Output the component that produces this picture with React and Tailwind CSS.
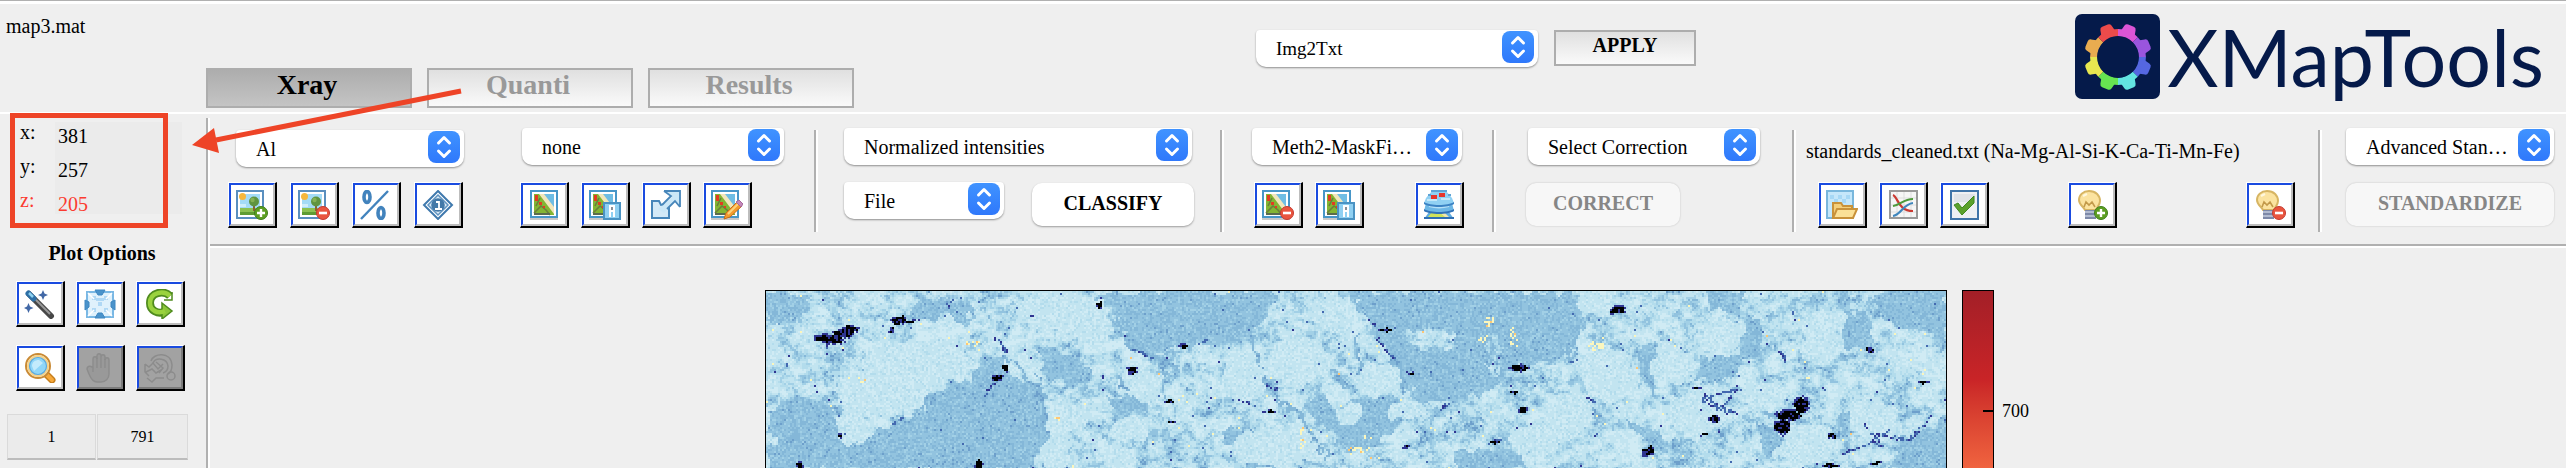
import React, { useMemo } from "react";

/* ---------- toolbar icons, drawn on a 32 x 30 grid ---------- */

function Svg({ children }) {
  return (
    <svg viewBox="0 0 32 30" className="h-[30px] w-8" aria-hidden="true">
      {children}
    </svg>
  );
}

const PlusBadge = () => (
  <g>
    <circle cx="25" cy="23" r="6.5" fill="#5d9e22" stroke="#3f7f1c" />
    <path d="M25 19v8M21 23h8" stroke="#fff" strokeWidth="2.4" />
  </g>
);

const MinusBadge = () => (
  <g>
    <circle cx="25" cy="23" r="6.5" fill="#e9553f" stroke="#c5392f" />
    <path d="M21 23h8" stroke="#fff" strokeWidth="2.6" />
  </g>
);

const PictureBase = () => (
  <g>
    <rect x="1" y="1" width="26" height="27" fill="#fff" stroke="#5a8fbf" strokeWidth="2" />
    <rect x="4" y="4" width="20" height="15" fill="#a3dbf7" />
    <path d="M4 14h6v3H4z" fill="#cfeefb" />
    <circle cx="6.500" cy="6.500" r="3.500" fill="#f6b73c" />
    <rect x="4" y="18" width="20" height="7" fill="#8cc152" />
    <path d="M4 22h20v3H4z" fill="#5f9c33" />
    <rect x="17" y="14" width="2" height="7" fill="#8a6134" />
    <circle cx="18" cy="11.500" r="5" fill="#5f9440" />
    <circle cx="16.500" cy="10" r="2.200" fill="#84b155" />
  </g>
);

const MapBase = () => (
  <g>
    <rect x="1" y="1" width="26" height="26" fill="#fff" stroke="#4796c8" strokeWidth="2" />
    <path d="M0 29h28" stroke="#c9c9c9" strokeWidth="2" />
    <rect x="4" y="4" width="20" height="21" fill="#83b533" />
    <path d="M12 4h12v15z" fill="#6fbde4" />
    <path d="M9 4h5l10 13v7z" fill="#f1e6bb" />
    <path d="M4 23l7-7 5 4 4 5M10 8l-4 8" stroke="#6a7f3a" strokeWidth="1.600" fill="none" />
    <path d="M5 5h3v6H5zM9 12h3v3H9zM13 16h2v2h-2z" fill="#e23b22" />
    <path d="M4 24h16" stroke="#5b6b4c" strokeWidth="2" />
  </g>
);

const WindowBadge = () => (
  <g>
    <rect x="15" y="13" width="16" height="16" fill="#8fd0f2" stroke="#4a93c3" strokeWidth="2" />
    <path d="M20 15h6v12h-2v-5h-2v5h-2z" fill="#fff" />
    <path d="M22 17h2v3h-2z" fill="#8a8f96" />
  </g>
);

const BulbBase = () => (
  <g>
    <path d="M13 1c7 0 11 4.500 11 10 0 4-3 6-4 9H9c-1-3-6-5-6-10C3 5 7 1 13 1z" fill="#fbe3a0" stroke="#d7b563" strokeWidth="2" />
    <path d="M8 17l2-5 3 3 3-3 3 5" fill="none" stroke="#c2994a" strokeWidth="1.600" />
    <path d="M7 6l4-2" stroke="#fff8df" strokeWidth="2" />
    <rect x="9" y="20" width="11" height="9" fill="#7d89a8" />
    <path d="M9 22h11M9 26h11" stroke="#c4cbdd" strokeWidth="1.500" />
  </g>
);

const ICONS = {
  addMap: (<><PictureBase /><PlusBadge /></>),
  removeMap: (<><PictureBase /><MinusBadge /></>),
  percent: (
    <g fill="none" stroke="#4283bd">
      <ellipse cx="7" cy="7" rx="3" ry="5.500" strokeWidth="3.600" />
      <ellipse cx="21" cy="23" rx="3" ry="5.500" strokeWidth="3.600" />
      <path d="M28 1L1 29" strokeWidth="2.400" />
    </g>
  ),
  info: (
    <g>
      <path d="M16 1l14 14-14 14L2 15z" fill="#fff" stroke="#3f79ad" strokeWidth="2" />
      <path d="M16 5l10 10-10 10L6 15z" fill="#dcebf6" stroke="#5f93c0" strokeWidth="1.500" />
      <circle cx="16" cy="15" r="6.800" fill="#4379a8" />
      <path d="M14 12h3v6M13 19h7" stroke="#fff" strokeWidth="1.800" fill="none" />
    </g>
  ),
  map: (<g transform="translate(2 0)"><MapBase /></g>),
  mapWindow: (<><MapBase /><WindowBadge /></>),
  mapRemove: (<><MapBase /><MinusBadge /></>),
  exportMap: (
    <g>
      <path d="M2 11h7l2 4 8-1v14H2z" fill="#d3e9f7" stroke="#4786ba" strokeWidth="2" />
      <path d="M8 19L22 7l-5-4V1h13v15l-5-5-11 12z" fill="#cbe7f7" />
      <path d="M14 1h16v16M14 1l7 5-9 9M30 17l-5-6-8 8" stroke="#4786ba" strokeWidth="1.800" fill="none" />
    </g>
  ),
  mapEdit: (
    <g>
      <MapBase />
      <path d="M13 29l2-6 11-11 5 4-12 11z" fill="#f39a2d" stroke="#c46d1c" />
      <path d="M17 24l10-10" stroke="#fbd27b" strokeWidth="2" />
      <path d="M25 12l3-2 4 4-2 3z" fill="#c487ba" stroke="#a5689b" />
    </g>
  ),
  layers: (
    <g>
      <path d="M6 22h20l5 7H1z" fill="#5fabdf" />
      <path d="M9 22h12l3 5H5z" fill="#cfe25c" />
      <path d="M16 22l6 5h4l-5-5z" fill="#f0e6b0" />
      <path d="M1 28h30" stroke="#2f6fb3" strokeWidth="2" />
      <path d="M3 13h26l2 8c-6 3-24 3-30 0z" fill="#6db7e6" />
      <path d="M1 19c6 4 24 4 30 0v2c-6 4-24 4-30 0z" fill="#3273b8" />
      <path d="M6 16c7 2 13 2 20 0" stroke="#b5e0f8" strokeWidth="2" fill="none" />
      <path d="M9 1h14l6 7 2 5c-6 3-24 3-30 0l2-5z" fill="#90d0f3" />
      <path d="M1 12c6 4 24 4 30 0v2c-6 4-24 4-30 0z" fill="#3c83c4" />
      <path d="M8 1h16M5 5h3M25 5h3" stroke="#5fa4d6" strokeWidth="2" />
      <path d="M4 10h10M18 9h9" stroke="#c3e8fa" strokeWidth="2" />
      <path d="M8 5h6v4H8zM16 3h6v4h-6z" fill="#e7352c" />
    </g>
  ),
  openMap: (
    <g>
      <rect x="1" y="1" width="26" height="27" fill="#c5e7fa" stroke="#79b7dc" strokeWidth="2" />
      <path d="M4 5h4v4H4zM12 5h4v4h-4zM20 5h4v4h-4zM8 9h4v4H8zM16 9h4v4h-4z" fill="#a6d8f5" />
      <path d="M7 28V13h8l2 3h9v4" fill="#f4cf7a" stroke="#c9923a" strokeWidth="2" />
      <path d="M7 28l4-9h20l-4 9z" fill="#fbe197" stroke="#c9923a" strokeWidth="2" />
    </g>
  ),
  chart: (
    <g>
      <rect x="3" y="1" width="27" height="27" fill="#f6f6f6" stroke="#9a9a9a" strokeWidth="2" />
      <path d="M10 2v25M17 2v25M24 2v25M4 8h25M4 15h25M4 22h25" stroke="#dedede" />
      <path d="M6 5c5 2 5 16 20 16" stroke="#cb3a32" strokeWidth="2.200" fill="none" />
      <path d="M6 16c8-1 10-7 20-7" stroke="#4f9a3c" strokeWidth="2.200" fill="none" />
      <path d="M6 26c8-1 10-12 20-13" stroke="#3f86bd" strokeWidth="2.200" fill="none" />
    </g>
  ),
  check: (
    <g>
      <rect x="3" y="1" width="27" height="28" fill="#eef0f3" stroke="#3f74a8" strokeWidth="2" />
      <path d="M6 4h21v8H6z" fill="#dfe3e8" />
      <path d="M6 15l4-2 4 5L26 6v7L14 25z" fill="#5ba12c" stroke="#3f8a1f" />
    </g>
  ),
  bulbAdd: (<><BulbBase /><PlusBadge /></>),
  bulbRemove: (<><BulbBase /><MinusBadge /></>),
  wand: (
    <g>
      <path d="M5 5l22 22" stroke="#474747" strokeWidth="6" strokeLinecap="round" />
      <path d="M10 9l16 16" stroke="#9a9a9a" strokeWidth="2" />
      <path d="M4.500 4.500l5 5" stroke="#2d6fa6" strokeWidth="6" strokeLinecap="round" />
      <path d="M5 4l4 4" stroke="#8fd2f1" strokeWidth="2.500" />
      <path d="M19 1l1.500 3.500L24 6l-3.500 1.500L19 11l-1.500-3.500L14 6l3.500-1.500zM4.500 14L6 17.500 9.500 19 6 20.500 4.500 24 3 20.500 0 19l3-1.500z" fill="#4268a6" />
    </g>
  ),
  fit: (
    <g>
      <rect x="3" y="3" width="26" height="25" fill="#dff1fc" stroke="#7ab8e4" strokeWidth="2" />
      <path d="M8 7h4v4H8zM20 7h4v4h-4zM14 13h4v4h-4zM8 19h4v4H8zM20 19h4v4h-4zM12 9h8v3h-8z" fill="#afd8f5" />
      <path d="M11 1h10l-3 5h-4zM11 29h10l-3-5h-4zM1 11l4 2v5l-4 3zM31 11l-4 2v5l4 3z" fill="#4a93cb" stroke="#3f88c2" />
      <path d="M4 4l6 6M28 4l-6 6M4 27l6-6M28 27l-6-6" stroke="#fff" strokeWidth="1.500" />
    </g>
  ),
  rotate: (
    <g>
      <path d="M26 7c-6-6-20-4-20 7 0 8 8 11 14 9" fill="none" stroke="#4f8b1e" strokeWidth="8" />
      <path d="M18 14l10 8-10 8z" fill="#8cc63a" stroke="#4f8b1e" strokeWidth="1.500" />
      <path d="M26 7c-6-6-20-4-20 7 0 8 8 11 15 8" fill="none" stroke="#9ad23e" strokeWidth="4.500" />
      <path d="M28 3v8h-8" fill="none" stroke="#4f8b1e" strokeWidth="1.500" />
    </g>
  ),
  zoom: (
    <g>
      <path d="M22 21l6 6" stroke="#c77f1d" strokeWidth="7" strokeLinecap="round" />
      <path d="M23 22l5 5" stroke="#f6a93b" strokeWidth="4" strokeLinecap="round" />
      <circle cx="14" cy="13" r="12" fill="#fff" stroke="#c98a35" strokeWidth="2" />
      <circle cx="14" cy="13" r="10" fill="#8fd6f8" stroke="#f5d28a" strokeWidth="2" />
      <circle cx="14" cy="13" r="8.500" fill="none" stroke="#5fa9db" strokeWidth="1.200" />
      <path d="M8 13c0-4 3-6 7-6l4 3-9 8z" fill="#c3ebfc" />
    </g>
  ),
  hand: (
    <g>
      <path d="M9 19V6c0-3 4-3 4 0V3c0-3 4-3 4 0v1c0-3 4-3 4 0v3c0-3 4-3 4 0v14c0 4-3 8-8 8h-4c-4 0-6-3-8-8l-2-5c0-3 4-4 6-1z" fill="#999999" stroke="#8c8c8c" strokeWidth="1.400" />
      <path d="M13 5v10M17 4v11M21 6v9" stroke="#8a8a8a" strokeWidth="1.200" />
    </g>
  ),
  resetView: (
    <g fill="none" stroke="#8c8c8c" strokeWidth="1.500">
      <path d="M7 8c2-8 20-10 21 4 0 5-2 8-4 9" />
      <path d="M9 10c3-6 14-5 15 3 0 4-2 6-5 7" />
      <path d="M1 11l4 3 4-4 5 6 5-5M2 19l6-3 4 4 5-3M3 25l5 4 4-4h8M1 11v8l4 4" />
      <circle cx="27" cy="23" r="4" />
      <path d="M12 9l7 6-4 5" />
    </g>
  ),
};

/* ---------- controls ---------- */

function IconButton({ icon, label, disabled = false }) {
  return (
    <button
      type="button"
      aria-label={label}
      disabled={disabled}
      className="flex h-[46px] w-[49px] shrink-0 border-t border-r-2 border-b-2 border-l border-t-white border-r-black border-b-black border-l-white bg-black"
    >
      <span
        className={
          disabled
            ? "flex h-full flex-1 items-center justify-center border-2 border-t-[#1a4be0] border-r-[#7b7b7b] border-b-[#7b7b7b] border-l-[#1a4be0] bg-[#a2a2a2]"
            : "flex h-full flex-1 items-center justify-center border-2 border-t-[#1a4be0] border-r-[#bdbdbd] border-b-[#bdbdbd] border-l-[#1a4be0] bg-white"
        }
      >
        <Svg>{ICONS[icon]}</Svg>
      </span>
    </button>
  );
}

function Picker({ label, value, width, size = "text-[20px]" }) {
  return (
    <div className={`relative h-[37px] shrink-0 ${width}`}>
      <select
        aria-label={label}
        defaultValue={value}
        className={`h-full w-full appearance-none rounded-t-[4px] rounded-b-[10px] bg-white pr-10 pl-5 leading-6 text-black shadow-[0_1px_2px_rgba(0,0,0,0.4)] ${size}`}
      >
        <option>{value}</option>
      </select>
      <span className="pointer-events-none absolute top-px right-1 flex h-8 w-8 items-center justify-center rounded-[8px] bg-linear-to-b from-[#4093ff] to-[#2f78fb]">
        <svg viewBox="0 0 16 24" className="h-6 w-4" fill="none" stroke="#fff" strokeWidth="3" strokeLinecap="round" strokeLinejoin="round">
          <path d="M2.500 8L8 2.500 13.500 8M2.500 16L8 21.500 13.500 16" />
        </svg>
      </span>
    </div>
  );
}

function PillButton({ children, width, disabled = false }) {
  return (
    <button
      type="button"
      disabled={disabled}
      className={`mt-px h-[43px] shrink-0 rounded-[10px] pb-[3px] text-[20px] font-bold ${width} ${
        disabled
          ? "bg-[#f7f7f7] text-[#868686] shadow-[0_0_2px_rgba(0,0,0,0.2)]"
          : "bg-white text-black shadow-[0_1px_2px_rgba(0,0,0,0.35)]"
      }`}
    >
      {children}
    </button>
  );
}

function Tab({ children, active = false }) {
  return (
    <button
      type="button"
      className={`h-10 w-[206px] border-2 border-[#adadad] bg-linear-to-b pr-1 pb-[7px] text-[28px] leading-7 font-bold ${
        active ? "from-[#adadad] to-[#c4c4c4] text-black" : "from-[#e0e0e0] to-[#fafafa] text-[#999999]"
      }`}
    >
      {children}
    </button>
  );
}

const Divider = () => (
  <div className="mt-4 h-[102px] w-1 shrink-0 border-r-2 border-l-2 border-r-white border-l-[#b0b0b0]" />
);

/* ---------- logo ---------- */

const GEAR = ["#db55d6", "#9a55de", "#5567e1", "#63e4e1", "#67e551", "#e7e750", "#e9ac50", "#ec4b4b"];

function Logo() {
  return (
    <div className="flex items-center gap-[7px] text-[#051a4a]">
      <svg viewBox="0 0 85 85" className="h-[85px] w-[85px]" aria-hidden="true">
        <rect width="85" height="85" rx="7" fill="#051a4a" />
        {GEAR.map((color, i) => (
          <g key={color} transform={`rotate(${i * 45 + 22.5} 43 43)`} fill={color}>
            <path d="M32.300 17.200A28 28 0 0 1 53.700 17.200L51 23.700A21 21 0 0 0 35 23.700Z" />
            <path d="M35.500 18L37 11.500Q37.500 9 40 9H46Q48.500 9 49 11.500L50.500 18Z" />
          </g>
        ))}
        <circle cx="43" cy="43" r="20.500" fill="#051a4a" />
      </svg>
      <span className="font-[Lato,sans-serif] text-[79px] leading-[85px]">XMapTools</span>
    </div>
  );
}

/* ---------- element map ---------- */

const COLORS = ["#d0ebf4", "#c2e4f0", "#b3dcec", "#a2d0e6", "#92c3df", "#84b7d8", "#6d9fcb", "#4369b0", "#2f3591", "#000000", "#fbf6bd", "#fdc777"];

const MEDIUM = [
  [0,0,47,0,40,20,30,26,10,33,0,35],
  [147,13,167,5,184,7,178,20,167,28,147,28,138,22],
  [180,8,200,10,205,28,190,34,182,24],
  [331,0,507,0,503,17,487,37,483,45,441,52,400,58,387,63,366,58,358,43,346,20],
  [586,0,816,0,816,30,808,50,791,67,774,70,740,80,715,103,685,110,652,107,635,90,621,65,605,40,590,20],
  [0,123,18,108,47,107,64,117,72,133,74,147,93,155,105,140,138,128,155,122,163,103,184,90,205,88,217,67,238,60,250,87,271,93,281,113,281,140,269,160,271,178,0,178],
  [595,103,635,107,635,135,600,158,570,150,560,125],
  [536,107,565,103,565,133,545,123],
  [271,60,312,60,329,83,304,97,275,80],
  [341,103,375,103,383,117,350,123],
  [453,137,495,137,491,150,462,150],
  [482,163,520,163,520,178,482,178],
  [1106,0,1180,0,1180,47,1140,33,1127,37,1110,17],
  [1075,22,1098,17,1106,47,1094,60,1077,50],
  [940,0,976,0,972,20,946,17],
  [871,57,887,47,887,93,871,90],
  [930,67,976,63,967,87,930,87],
  [972,27,993,23,993,63,976,67],
  [1073,117,1098,113,1081,140,1069,133],
  [1136,147,1180,123,1180,178,1119,178],
  [685,157,757,160,761,178,690,178],
  [858,127,879,133,904,153,888,157],
  [989,127,1014,143,1005,167,993,153],
];

const PALE = [
  [115,100,48,26],[85,135,18,18],[150,72,55,22],[290,18,42,20],[325,38,18,18],[253,74,13,15],[371,90,20,18],
  [478,83,22,28],[532,70,33,22],[565,20,25,18],[611,87,22,17],[582,123,13,10],[841,83,28,26],
  [904,73,20,21],[803,123,21,22],[930,120,27,22],[997,103,22,13],[955,40,20,17],[1056,30,20,16],
  [1056,57,24,11],[1043,153,30,20],[1106,127,25,17],[366,135,20,13],[350,167,17,12],[288,160,15,18],
  [510,155,45,20],[829,10,18,14],[640,118,16,12],[300,125,22,14],[5,148,5,5],[770,150,26,14],
];

/* Patches of fine mixed grain inside the darker zones. */
const MIXED = [[663,46,24,12],[728,66,8,20]];

const BLOBS = [
  [64,47,14,5],[82,37,9,4],[76,42,8,4],[132,28,6,3],[145,29,6,1],[125,38,3,2],[239,77,2,4],[230,85,4,3],[365,78,4,4],
  [402,109,4,2],[404,130,5,1],[211,172,3,5],[33,173,3,3],[74,145,2,2],[503,119,5,1],[618,38,6,1],
  [416,54,5,1],[333,13,3,3],[264,24,2,1],[753,76,9,3],[851,18,6,4],[756,119,5,3],[881,159,6,4],[929,96,4,1],
  [947,127,4,3],[938,143,4,1],[1035,113,8,7],[1022,123,13,5],[1016,135,7,7],[1065,144,4,3],
  [1064,174,8,2],[1102,58,4,2],[1108,171,5,1],[1157,90,4,1],[747,100,2,1],[644,81,2,1],[639,155,3,1],[728,150,5,1],
];

const VEINS = [
  [217,105,226,90],[611,47,628,68],[1108,143,1144,148],[1144,148,1163,125],[1075,162,1102,152],[1098,132,1115,155],[1105,150,1122,138],
  [940,105,970,98],[942,112,970,122],[955,116,970,95],[938,102,960,124],[935,118,938,104],[820,105,829,110],[721,153,736,147],
  [126,133,135,126],[498,92,512,98],[672,118,682,112],[610,36,600,26],
  [366,58,385,66],[460,105,485,112],[228,45,240,60],[178,22,184,8],[805,70,812,65],[1014,60,1019,70],[432,52,441,48],
];

const FAINT = [
  [485,50,503,95],[503,95,540,135],[540,135,560,165],[346,25,366,58],[366,58,410,75],[271,80,280,140],[240,60,280,110],
  [100,150,115,165],[25,110,28,150],[565,80,590,100],[590,40,592,80],[628,68,640,100],[140,130,165,105],[715,50,735,90],
  [395,80,400,110],[350,85,370,110],[800,70,812,40],[820,110,835,130],[870,60,888,100],[1000,120,1030,125],
];

const YELLOW = [[590,158,12,3],[602,145,5,3],[207,52,7,3],[414,109,5,1],[829,55,8,6],[715,47,5,4],[90,88,8,3],[535,148,2,12],[722,30,4,6],[748,45,4,10],[291,127,4,2]];

const rand = (x, y, s) => {
  let h = (x * 374761393 + y * 668265263 + s * 974634721) | 0;
  h = Math.imul(h ^ (h >>> 13), 1274126177);
  return ((h ^ (h >>> 16)) >>> 0) / 4294967296;
};

const noise = (x, y, s) => {
  const xi = Math.floor(x);
  const yi = Math.floor(y);
  const u = (x - xi) * (x - xi) * (3 - 2 * (x - xi));
  const v = (y - yi) * (y - yi) * (3 - 2 * (y - yi));
  const top = rand(xi, yi, s) * (1 - u) + rand(xi + 1, yi, s) * u;
  const low = rand(xi, yi + 1, s) * (1 - u) + rand(xi + 1, yi + 1, s) * u;
  return top * (1 - v) + low * v;
};

const inside = (p, x, y) => {
  let hit = false;
  for (let i = 0, j = p.length - 2; i < p.length; j = i, i += 2) {
    if (p[i + 1] > y !== p[j + 1] > y && x < ((p[j] - p[i]) * (y - p[i + 1])) / (p[j + 1] - p[i + 1]) + p[i]) hit = !hit;
  }
  return hit;
};

const inEllipse = ([cx, cy, rx, ry], x, y) => ((x - cx) / rx) ** 2 + ((y - cy) / ry) ** 2 < 1;

const toSegment = ([x1, y1, x2, y2], x, y) => {
  const dx = x2 - x1;
  const dy = y2 - y1;
  const t = Math.max(0, Math.min(1, ((x - x1) * dx + (y - y1) * dy) / (dx * dx + dy * dy)));
  return Math.hypot(x - x1 - t * dx, y - y1 - t * dy);
};

function colorAt(px, py) {
  const r = rand(px, py, 1);
  const x = px + (noise(px / 8, py / 8, 2) - 0.5) * 11;
  const y = py + (noise(px / 8, py / 8, 3) - 0.5) * 11;
  const bx = px + (noise(px / 4, py / 4, 4) - 0.5) * 4;
  const by = py + (noise(px / 4, py / 4, 5) - 0.5) * 3;
  for (const [cx, cy, rx, ry] of BLOBS) {
    const d = ((bx - cx) / (rx + 0.8)) ** 2 + ((by - cy) / (ry + 0.4)) ** 2;
    if (d < 0.8) return r < 0.25 ? 8 : 9;
    if (d < 1.2 && r < 0.6) return 8;
  }
  for (const v of VEINS) {
    if (toSegment(v, bx, by) < 1.2 && r < 0.75) return r < 0.3 ? 8 : 7;
  }
  if (YELLOW.some((e) => inEllipse(e, bx, by)) && r < 0.35) return r < 0.03 ? 11 : 10;
  for (const v of FAINT) {
    if (toSegment(v, x, y) < 1.6 && r < 0.8) return r < 0.12 ? 6 : 5;
  }
  const mixed = MIXED.some((e) => inEllipse(e, x, y));
  const pale = !mixed && PALE.some((e) => inEllipse(e, x, y));
  const medium = !mixed && !pale && MEDIUM.some((p) => inside(p, x, y));
  const fleck = rand(px, py, 6);
  if (medium) {
    if (fleck < 0.002) return 7;
    return r < 0.14 ? 3 : r < 0.64 ? 4 : r < 0.97 ? 5 : 6;
  }
  if (pale) {
    if (fleck < 0.001) return 7;
    return r < 0.28 ? 0 : r < 0.86 ? 1 : 2;
  }
  if (fleck < 0.003) return 10;
  if (fleck < 0.0033) return 11;
  if (fleck < 0.007) return 7;
  if (fleck < 0.009) return 8;
  const grain = noise(px / 3, py / 3, 9);
  const n = noise(px / 14, py / 11, 7) * 0.42 + noise(px / 6, py / 4, 8) * 0.33 + grain * 0.25;
  const t = n + (r - 0.5) * 0.24;
  return t < 0.33 ? 0 : t < 0.49 ? 1 : t < 0.58 ? 2 : t < 0.65 ? 3 : t < 0.74 ? 4 : t < 0.82 ? 5 : 6;
}

function ElementMap() {
  const paths = useMemo(() => {
    const out = COLORS.map(() => []);
    for (let y = 0; y < 178; y += 2) {
      let start = 0;
      let current = colorAt(0, y);
      for (let x = 2; x <= 1180; x += 2) {
        const next = x < 1180 ? colorAt(x, y) : -1;
        if (next !== current) {
          out[current].push(`M${start} ${y}H${x}v2H${start}z`);
          start = x;
          current = next;
        }
      }
    }
    return out.map((p) => p.join(""));
  }, []);
  return (
    <svg viewBox="0 0 1180 178" className="block w-full" shapeRendering="crispEdges" role="img" aria-label="Al map">
      {paths.map((d, i) => (
        <path key={COLORS[i]} d={d} fill={COLORS[i]} />
      ))}
    </svg>
  );
}

/* ---------- page ---------- */

const READOUT = [
  { axis: "x:", value: "381", tone: "text-black" },
  { axis: "y:", value: "257", tone: "text-black" },
  { axis: "z:", value: "205", tone: "text-[#fb3b30]" },
];

export default function App() {
  return (
    <div className="relative flex min-h-screen flex-col overflow-hidden bg-[#efefef] font-['Liberation_Serif',serif] text-[20px] leading-6 text-black">
      <header className="flex border-t border-b-2 border-t-[#b0b0b0] border-b-white">
        <div className="flex h-[111px] flex-1 border-t-[3px] border-white">
          <div className="w-[206px] shrink-0 pt-[10px] pl-[6px]">map3.mat</div>
          <nav className="flex shrink-0 items-end gap-[15px] pb-1">
            <Tab active>Xray</Tab>
            <Tab>Quanti</Tab>
            <Tab>Results</Tab>
          </nav>
          <div className="ml-[402px] flex shrink-0 items-start gap-4 pt-[26px]">
            <Picker label="Export format" value="Img2Txt" width="w-[282px]" size="text-[19px]" />
            <button type="button" className="h-9 w-[142px] border-2 border-[#adadad] bg-linear-to-b from-[#e0e0e0] to-[#fafafa] pb-[6px] font-bold">
              APPLY
            </button>
          </div>
          <div className="ml-auto shrink-0 pt-[10px] pr-[22px]">
            <Logo />
          </div>
        </div>
      </header>

      <div className="flex flex-1">
        <aside className="w-[206px] shrink-0">
          <dl className="h-[114px] pt-2 pl-5">
            {READOUT.map((row) => (
              <div key={row.axis} className={`flex h-[34px] last:h-6 ${row.tone}`}>
                <dt className="w-[35px] leading-5">{row.axis}</dt>
                <dd className="w-[127px] bg-[#ebebeb] pl-[3px] leading-7">{row.value}</dd>
              </div>
            ))}
          </dl>
          <h2 className="mt-[13px] pr-[2px] text-center font-bold">Plot Options</h2>
          <div className="mt-4 grid w-fit grid-cols-3 gap-x-[11px] gap-y-[18px] pl-4">
            <IconButton icon="wand" label="Auto contrast" />
            <IconButton icon="fit" label="Fit colour range" />
            <IconButton icon="rotate" label="Rotate" />
            <IconButton icon="zoom" label="Zoom" />
            <IconButton icon="hand" label="Pan" disabled />
            <IconButton icon="resetView" label="Reset view" disabled />
          </div>
          <div className="mt-[23px] flex gap-px pl-[7px] text-[16px]">
            <input aria-label="Minimum" defaultValue="1" className="h-[46px] w-[89px] border border-b-2 border-[#dadada] border-b-[#bcbcbc] bg-[#ebebeb] text-center" />
            <input aria-label="Maximum" defaultValue="791" className="h-[46px] w-[91px] border border-b-2 border-[#dadada] border-b-[#bcbcbc] bg-[#ebebeb] text-center" />
          </div>
        </aside>

        <div className="mt-1 w-1 shrink-0 border-r-2 border-l-2 border-r-white border-l-[#b0b0b0]" />

        <main className="flex min-w-0 flex-1 flex-col">
          <div className="flex h-[132px] shrink-0 border-b-2 border-[#b0b0b0]">
            <div className="ml-[18px] shrink-0 pt-4">
              <div className="pl-2">
                <Picker label="Element" value="Al" width="w-[228px]" />
              </div>
              <div className="mt-[15px] flex gap-[13px]">
                <IconButton icon="addMap" label="Add map" />
                <IconButton icon="removeMap" label="Remove map" />
                <IconButton icon="percent" label="Percent" />
                <IconButton icon="info" label="Map information" />
              </div>
            </div>

            <div className="ml-14 shrink-0 pt-[14px]">
              <div className="pl-[2px]">
                <Picker label="Mask" value="none" width="w-[262px]" />
              </div>
              <div className="mt-[17px] flex gap-3">
                <IconButton icon="map" label="Show mask" />
                <IconButton icon="mapWindow" label="Mask window" />
                <IconButton icon="exportMap" label="Export mask" />
                <IconButton icon="mapEdit" label="Edit mask" />
              </div>
            </div>

            <div className="ml-[30px] flex shrink-0 gap-[26px]">
              <Divider />
              <div className="pt-[14px]">
                <Picker label="Classification input" value="Normalized intensities" width="w-[348px]" />
                <div className="mt-[17px] flex gap-[28px]">
                  <Picker label="Source" value="File" width="w-[160px]" />
                  <PillButton width="w-[162px]">CLASSIFY</PillButton>
                </div>
              </div>
              <Divider />
              <div className="w-[214px] pt-[14px] pl-[2px]">
                <Picker label="Mask method" value="Meth2-MaskFi…" width="w-[210px]" />
                <div className="mt-[17px] flex gap-3 pl-[2px]">
                  <IconButton icon="mapRemove" label="Delete mask" />
                  <IconButton icon="mapWindow" label="Mask details" />
                  <div className="ml-auto">
                    <IconButton icon="layers" label="Merge layers" />
                  </div>
                </div>
              </div>
            </div>

            <div className="ml-[28px] flex shrink-0 gap-[30px]">
              <Divider />
              <div className="pt-[14px]">
                <div className="pl-[2px]">
                  <Picker label="Correction" value="Select Correction" width="w-[232px]" />
                </div>
                <div className="mt-[17px]">
                  <PillButton width="w-[154px]" disabled>CORRECT</PillButton>
                </div>
              </div>
            </div>

            <div className="ml-8 flex shrink-0 gap-[10px]">
              <Divider />
              <div className="pt-[14px]">
                <div className="h-[37px] pt-[11px]">standards_cleaned.txt (Na-Mg-Al-Si-K-Ca-Ti-Mn-Fe)</div>
                <div className="mt-[17px] flex gap-3 pl-3">
                  <IconButton icon="openMap" label="Open standards" />
                  <IconButton icon="chart" label="Standard profiles" />
                  <IconButton icon="check" label="Check standards" />
                  <div className="ml-[67px] flex gap-[129px]">
                    <IconButton icon="bulbAdd" label="Add hint" />
                    <IconButton icon="bulbRemove" label="Remove hint" />
                  </div>
                </div>
              </div>
            </div>

            <div className="ml-auto flex shrink-0 gap-6 pr-3">
              <Divider />
              <div className="pt-[14px]">
                <Picker label="Standardization" value="Advanced Stan…" width="w-[208px]" />
                <div className="mt-[17px]">
                  <PillButton width="w-[208px]" disabled>STANDARDIZE</PillButton>
                </div>
              </div>
            </div>
          </div>

          <section className="flex items-start justify-center border-t-2 border-white pt-[42px] pl-[18px]">
            <div className="w-[1182px] min-w-0 border-t border-r border-l border-black">
              <ElementMap />
            </div>
            <div className="ml-[15px] flex h-[178px] w-8 shrink-0 items-start justify-end border-t border-r border-l border-black bg-linear-to-b from-[#a31f27] via-[#c92427] to-[#f0633f]">
              <div className="mt-[119px] h-[2px] w-[10px] bg-black" />
            </div>
            <div className="mt-[109px] ml-2 shrink-0 text-[18px]">700</div>
          </section>
        </main>
      </div>

      <div className="pointer-events-none absolute top-[113px] left-[10px] h-[115px] w-[158px] border-[5px] border-[#ee4427]" />
      <svg viewBox="0 0 280 70" className="pointer-events-none absolute top-[84px] left-[190px] h-[70px] w-[280px]" aria-hidden="true">
        <path d="M271 7L26 56" stroke="#ee4427" strokeWidth="5" />
        <path d="M2 61L24 44L29 69Z" fill="#ee4427" />
      </svg>
    </div>
  );
}
